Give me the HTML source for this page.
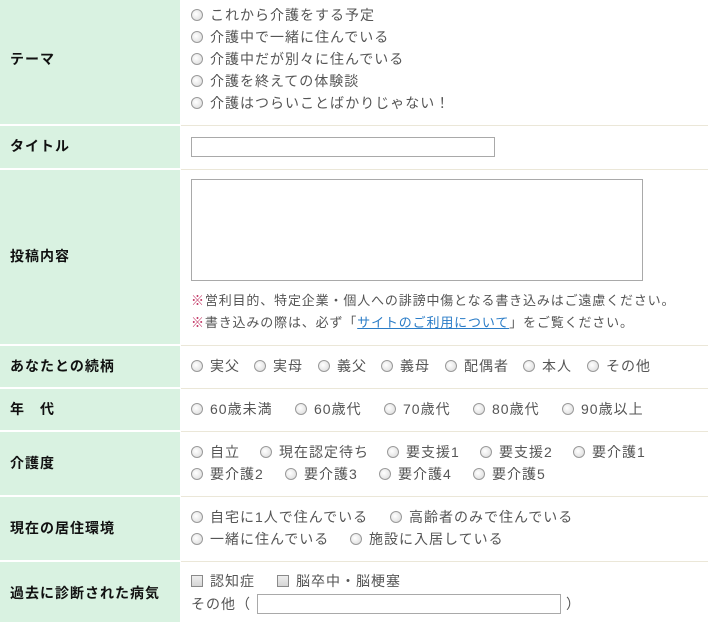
<!DOCTYPE html><html><head><meta charset="utf-8"><style>
body{margin:0;width:708px;height:622px;position:relative;overflow:hidden;background:#fff;font-family:"Liberation Sans","Noto Sans CJK JP",sans-serif;font-size:14px;color:#555}
.lab{position:absolute;left:0;width:180px;background:#d9f2e1}
.lt{position:absolute;left:10px;font-weight:bold;color:#111;line-height:20px;letter-spacing:1px}
.hl{position:absolute;left:181px;right:0;height:1px;background:#ebe7d8}
.t{position:absolute;line-height:20px;white-space:nowrap;letter-spacing:1px}
.r{position:absolute;width:10px;height:10px;border:1px solid #9a9a9a;border-radius:50%;background:radial-gradient(circle at 40% 40%,#fff,#d8d8d8)}
.c{position:absolute;width:10px;height:10px;border:1px solid #8a8a8a;background:linear-gradient(#eee,#d6d6d6)}
.box{position:absolute;border:1px solid #a9a9a9;background:#fff;box-sizing:border-box}
a{color:#2a7cc7}
.red{color:#c03060}
.n{font-size:13px;letter-spacing:0.85px}
</style></head><body>
<div class="lab" style="top:0;height:124px"></div><div class="lt" style="top:49px">テーマ</div>
<div class="lab" style="top:126px;height:42px"></div><div class="lt" style="top:136px">タイトル</div>
<div class="lab" style="top:170px;height:174px"></div><div class="lt" style="top:246px">投稿内容</div>
<div class="lab" style="top:346px;height:41px"></div><div class="lt" style="top:356px">あなたとの続柄</div>
<div class="lab" style="top:389px;height:41px"></div><div class="lt" style="top:399px">年　代</div>
<div class="lab" style="top:432px;height:63px"></div><div class="lt" style="top:453px">介護度</div>
<div class="lab" style="top:497px;height:63px"></div><div class="lt" style="top:518px">現在の居住環境</div>
<div class="lab" style="top:562px;height:60px"></div><div class="lt" style="top:583px">過去に診断された病気</div>
<div class="hl" style="top:125px"></div><div class="hl" style="top:169px"></div><div class="hl" style="top:345px"></div><div class="hl" style="top:388px"></div><div class="hl" style="top:431px"></div><div class="hl" style="top:496px"></div><div class="hl" style="top:561px"></div>

<div class="r" style="left:191px;top:9px"></div><div class="t" style="left:210px;top:5px">これから介護をする予定</div>
<div class="r" style="left:191px;top:31px"></div><div class="t" style="left:210px;top:27px">介護中で一緒に住んでいる</div>
<div class="r" style="left:191px;top:53px"></div><div class="t" style="left:210px;top:49px">介護中だが別々に住んでいる</div>
<div class="r" style="left:191px;top:75px"></div><div class="t" style="left:210px;top:71px">介護を終えての体験談</div>
<div class="r" style="left:191px;top:97px"></div><div class="t" style="left:210px;top:93px">介護はつらいことばかりじゃない！</div>

<div class="box" style="left:191px;top:137px;width:304px;height:20px"></div>
<div class="box" style="left:191px;top:179px;width:452px;height:102px"></div>
<div class="t n" style="left:191px;top:291px"><span class="red">※</span>営利目的、特定企業・個人への誹謗中傷となる書き込みはご遠慮ください。</div>
<div class="t n" style="left:191px;top:313px"><span class="red">※</span>書き込みの際は、必ず「<a href="#">サイトのご利用について</a>」をご覧ください。</div>

<div class="r" style="left:191px;top:360px"></div><div class="t" style="left:210px;top:356px">実父</div>
<div class="r" style="left:254px;top:360px"></div><div class="t" style="left:273px;top:356px">実母</div>
<div class="r" style="left:318px;top:360px"></div><div class="t" style="left:337px;top:356px">義父</div>
<div class="r" style="left:381px;top:360px"></div><div class="t" style="left:400px;top:356px">義母</div>
<div class="r" style="left:445px;top:360px"></div><div class="t" style="left:464px;top:356px">配偶者</div>
<div class="r" style="left:523px;top:360px"></div><div class="t" style="left:542px;top:356px">本人</div>
<div class="r" style="left:587px;top:360px"></div><div class="t" style="left:606px;top:356px">その他</div>

<div class="r" style="left:191px;top:403px"></div><div class="t" style="left:210px;top:399px">60歳未満</div>
<div class="r" style="left:295px;top:403px"></div><div class="t" style="left:314px;top:399px">60歳代</div>
<div class="r" style="left:384px;top:403px"></div><div class="t" style="left:403px;top:399px">70歳代</div>
<div class="r" style="left:473px;top:403px"></div><div class="t" style="left:492px;top:399px">80歳代</div>
<div class="r" style="left:562px;top:403px"></div><div class="t" style="left:581px;top:399px">90歳以上</div>

<div class="r" style="left:191px;top:446px"></div><div class="t" style="left:210px;top:442px">自立</div>
<div class="r" style="left:260px;top:446px"></div><div class="t" style="left:279px;top:442px">現在認定待ち</div>
<div class="r" style="left:387px;top:446px"></div><div class="t" style="left:406px;top:442px">要支援1</div>
<div class="r" style="left:480px;top:446px"></div><div class="t" style="left:499px;top:442px">要支援2</div>
<div class="r" style="left:573px;top:446px"></div><div class="t" style="left:592px;top:442px">要介護1</div>
<div class="r" style="left:191px;top:468px"></div><div class="t" style="left:210px;top:464px">要介護2</div>
<div class="r" style="left:285px;top:468px"></div><div class="t" style="left:304px;top:464px">要介護3</div>
<div class="r" style="left:379px;top:468px"></div><div class="t" style="left:398px;top:464px">要介護4</div>
<div class="r" style="left:473px;top:468px"></div><div class="t" style="left:492px;top:464px">要介護5</div>

<div class="r" style="left:191px;top:511px"></div><div class="t" style="left:210px;top:507px">自宅に1人で住んでいる</div>
<div class="r" style="left:390px;top:511px"></div><div class="t" style="left:409px;top:507px">高齢者のみで住んでいる</div>
<div class="r" style="left:191px;top:533px"></div><div class="t" style="left:210px;top:529px">一緒に住んでいる</div>
<div class="r" style="left:350px;top:533px"></div><div class="t" style="left:369px;top:529px">施設に入居している</div>

<div class="c" style="left:191px;top:575px"></div><div class="t" style="left:210px;top:571px">認知症</div>
<div class="c" style="left:277px;top:575px"></div><div class="t" style="left:296px;top:571px">脳卒中・脳梗塞</div>
<div class="t" style="left:191px;top:594px">その他（</div>
<div class="box" style="left:257px;top:594px;width:304px;height:20px"></div>
<div class="t" style="left:566px;top:594px">）</div>
</body></html>
